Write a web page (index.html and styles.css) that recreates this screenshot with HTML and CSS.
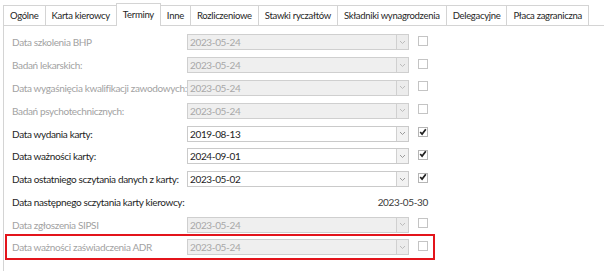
FILE: index.html
```html
<!DOCTYPE html>
<html lang="pl">
<head>
<meta charset="utf-8">
<link rel="stylesheet" href="styles.css">
</head>
<body>
<div class="window">
  <div class="tabs">
    <div class="tab">Ogólne</div>
    <div class="tab">Karta kierowcy</div>
    <div class="tab active">Terminy</div>
    <div class="tab">Inne</div>
    <div class="tab">Rozliczeniowe</div>
    <div class="tab">Stawki ryczałtów</div>
    <div class="tab">Składniki wynagrodzenia</div>
    <div class="tab">Delegacyjne</div>
    <div class="tab">Płaca zagraniczna</div>
  </div>
  <div class="panel">
    <div class="row disabled">
      <span class="label">Data szkolenia BHP</span>
      <div class="combo"><span class="value">2023-05-24</span><span class="btn"><svg width="7" height="5" viewBox="0 0 7 5"><path d="M1 1l2.5 2.5L6 1" fill="none" stroke="currentColor" stroke-width="1"/></svg></span></div>
      <span></span>
      <span class="check"></span>
    </div>
    <div class="row disabled">
      <span class="label">Badań lekarskich:</span>
      <div class="combo"><span class="value">2023-05-24</span><span class="btn"><svg width="7" height="5" viewBox="0 0 7 5"><path d="M1 1l2.5 2.5L6 1" fill="none" stroke="currentColor" stroke-width="1"/></svg></span></div>
      <span></span>
      <span class="check"></span>
    </div>
    <div class="row disabled">
      <span class="label">Data wygaśnięcia kwalifikacji zawodowych:</span>
      <div class="combo"><span class="value">2023-05-24</span><span class="btn"><svg width="7" height="5" viewBox="0 0 7 5"><path d="M1 1l2.5 2.5L6 1" fill="none" stroke="currentColor" stroke-width="1"/></svg></span></div>
      <span></span>
      <span class="check"></span>
    </div>
    <div class="row disabled">
      <span class="label">Badań psychotechnicznych:</span>
      <div class="combo"><span class="value">2023-05-24</span><span class="btn"><svg width="7" height="5" viewBox="0 0 7 5"><path d="M1 1l2.5 2.5L6 1" fill="none" stroke="currentColor" stroke-width="1"/></svg></span></div>
      <span></span>
      <span class="check"></span>
    </div>
    <div class="row">
      <span class="label">Data wydania karty:</span>
      <div class="combo"><span class="value">2019-08-13</span><span class="btn"><svg width="7" height="5" viewBox="0 0 7 5"><path d="M1 1l2.5 2.5L6 1" fill="none" stroke="currentColor" stroke-width="1"/></svg></span></div>
      <span></span>
      <span class="check checked"><svg width="8" height="8" viewBox="0 0 8 8"><path d="M1.2 4l1.9 2.1L6.8 1.2" fill="none" stroke="#222" stroke-width="1.7"/></svg></span>
    </div>
    <div class="row">
      <span class="label">Data ważności karty:</span>
      <div class="combo"><span class="value">2024-09-01</span><span class="btn"><svg width="7" height="5" viewBox="0 0 7 5"><path d="M1 1l2.5 2.5L6 1" fill="none" stroke="currentColor" stroke-width="1"/></svg></span></div>
      <span></span>
      <span class="check checked"><svg width="8" height="8" viewBox="0 0 8 8"><path d="M1.2 4l1.9 2.1L6.8 1.2" fill="none" stroke="#222" stroke-width="1.7"/></svg></span>
    </div>
    <div class="row">
      <span class="label">Data ostatniego sczytania danych z karty:</span>
      <div class="combo"><span class="value">2023-05-02</span><span class="btn"><svg width="7" height="5" viewBox="0 0 7 5"><path d="M1 1l2.5 2.5L6 1" fill="none" stroke="currentColor" stroke-width="1"/></svg></span></div>
      <span></span>
      <span class="check checked"><svg width="8" height="8" viewBox="0 0 8 8"><path d="M1.2 4l1.9 2.1L6.8 1.2" fill="none" stroke="#222" stroke-width="1.7"/></svg></span>
    </div>
    <div class="row info">
      <span class="label">Data następnego sczytania karty kierowcy:</span>
      <span class="date">2023-05-30</span>
    </div>
    <div class="row disabled">
      <span class="label">Data zgłoszenia SIPSI</span>
      <div class="combo"><span class="value">2023-05-24</span><span class="btn"><svg width="7" height="5" viewBox="0 0 7 5"><path d="M1 1l2.5 2.5L6 1" fill="none" stroke="currentColor" stroke-width="1"/></svg></span></div>
      <span></span>
      <span class="check"></span>
    </div>
    <div class="highlight">
      <div class="row disabled">
        <span class="label">Data ważności zaświadczenia ADR</span>
        <div class="combo"><span class="value">2023-05-24</span><span class="btn"><svg width="7" height="5" viewBox="0 0 7 5"><path d="M1 1l2.5 2.5L6 1" fill="none" stroke="currentColor" stroke-width="1"/></svg></span></div>
        <span></span>
        <span class="check"></span>
      </div>
    </div>
  </div>
</div>
</body>
</html>
```

FILE: styles.css
```css
html, body {
  margin: 0;
  padding: 0;
  background: #ffffff;
}
body {
  font-family: Lato, "Liberation Sans", sans-serif;
  font-size: 10px;
  letter-spacing: -0.35px;
  color: #1e1e1e;
}
.window {
  width: 604px;
  height: 271px;
  padding-left: 3px;
  box-sizing: border-box;
  overflow: hidden;
}
.tabs {
  display: flex;
  align-items: flex-end;
  height: 25px;
  border-bottom: 1px solid #d4d4d4;
}
.tab {
  height: 20px;
  line-height: 19px;
  padding: 0 6px;
  border: 1px solid #d4d4d4;
  border-bottom: none;
  margin-right: -1px;
  color: #262626;
  font-size: 9.5px;
  letter-spacing: -0.3px;
  white-space: nowrap;
  box-sizing: border-box;
  background: #fff;
}
.tab.active {
  height: 23px;
  line-height: 22px;
  margin-bottom: -1px;
  position: relative;
  z-index: 1;
}
.panel {
  border-left: 1px solid #d4d4d4;
  padding: 5px 0 0 8px;
  height: 245px;
  box-sizing: border-box;
}
.row {
  display: grid;
  grid-template-columns: 175px 222px 9px 10px;
  align-items: center;
  height: 22.8px;
  width: 416px;
}
.label {
  white-space: nowrap;
  color: #1e1e1e;
}
.row.disabled .label {
  color: #a2a2a2;
}
.combo {
  display: flex;
  height: 16px;
  border: 1px solid #cacaca;
  box-sizing: border-box;
  background: #ffffff;
}
.row.disabled .combo {
  background: #efefef;
  border-color: #cfcfcf;
}
.value {
  flex: 1;
  padding-left: 2px;
  line-height: 14px;
  color: #1e1e1e;
}
.row.disabled .value {
  color: #a8a8a8;
}
.btn {
  width: 11px;
  border-left: 1px solid #d0d0d0;
  background: #f2f2f2;
  display: flex;
  align-items: center;
  justify-content: center;
  color: #9a9a9a;
}
.row.disabled .btn {
  background: #ececec;
  color: #bcbcbc;
}
.check {
  width: 10px;
  height: 10px;
  border: 1px solid #b5b5b5;
  box-sizing: border-box;
  background: #fff;
  display: flex;
  align-items: center;
  justify-content: center;
  margin-top: -3px;
}
.row.disabled .check {
  border-color: #c4c4c4;
}
.check svg {
  display: block;
  margin-top: -1px;
}
.row.info {
  grid-template-columns: 1fr auto;
}
.date {
  color: #3a3a3a;
}
.highlight {
  border: 2px solid #e3141b;
  margin: -2px 0 0 -7px;
  padding: 0 5px;
  width: 416px;
  height: 22px;
  display: flex;
  align-items: center;
}
```
